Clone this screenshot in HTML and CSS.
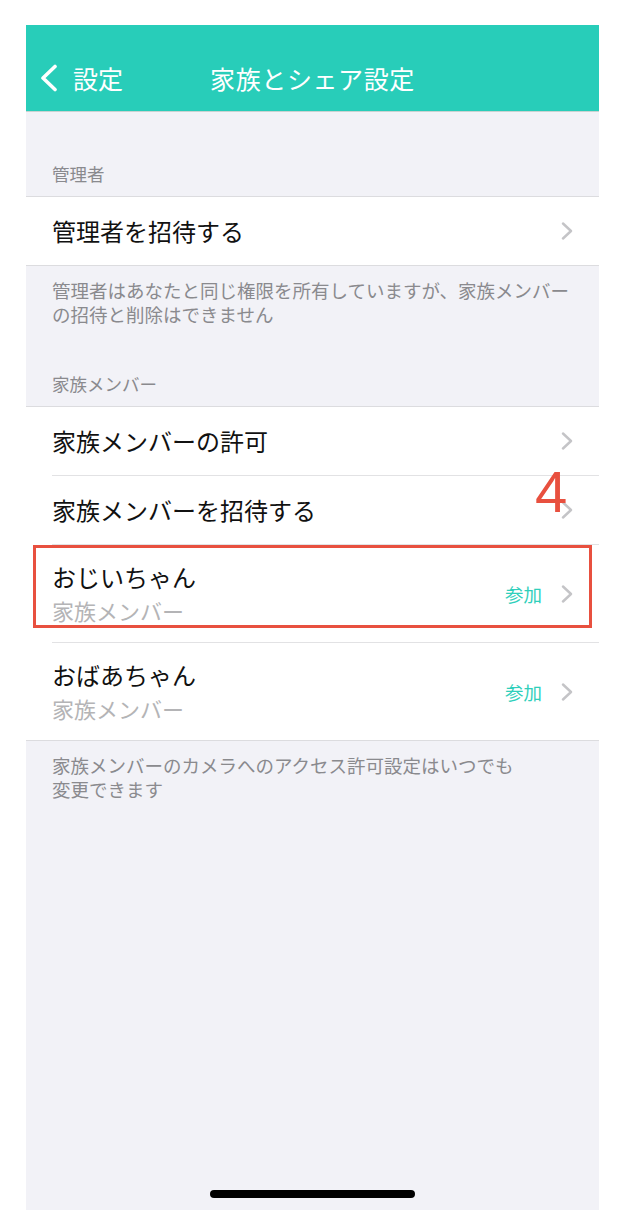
FILE: index.html
```html
<!DOCTYPE html>
<html lang="ja">
<head>
    <meta charset="UTF-8">
    <title>家族とシェア設定</title>
    <link rel="stylesheet" href="styles.css">
</head>
<body>
<div class="screen">
    <header class="nav-bar">
        <a class="back" href="#">
            <svg width="18" height="28" viewBox="0 0 18 28"><path d="M15 2.5 L3 14 L15 25.5" fill="none" stroke="#fff" stroke-width="3.6" stroke-linecap="round" stroke-linejoin="round"/></svg>
            <span>設定</span>
        </a>
        <h1 class="nav-title">家族とシェア設定</h1>
        <span></span>
    </header>
    <main class="content">
        <p class="section-label first">管理者</p>
        <div class="group">
            <div class="row">
                <div class="row-inner">
                    <span class="row-title">管理者を招待する</span>
                    <svg class="chevron" width="12" height="18" viewBox="0 0 12 18"><path d="M2 1.5 L10 9 L2 16.5" fill="none" stroke="#c4c4c7" stroke-width="2.4" stroke-linecap="round" stroke-linejoin="round"/></svg>
                </div>
            </div>
        </div>
        <p class="section-note">管理者はあなたと同じ権限を所有していますが、家族メンバー<br>の招待と削除はできません</p>

        <p class="section-label">家族メンバー</p>
        <div class="group">
            <div class="row">
                <div class="row-inner">
                    <span class="row-title">家族メンバーの許可</span>
                    <svg class="chevron" width="12" height="18" viewBox="0 0 12 18"><path d="M2 1.5 L10 9 L2 16.5" fill="none" stroke="#c4c4c7" stroke-width="2.4" stroke-linecap="round" stroke-linejoin="round"/></svg>
                </div>
            </div>
            <div class="row">
                <div class="row-inner">
                    <span class="row-title">家族メンバーを招待する</span>
                    <svg class="chevron" width="12" height="18" viewBox="0 0 12 18"><path d="M2 1.5 L10 9 L2 16.5" fill="none" stroke="#c4c4c7" stroke-width="2.4" stroke-linecap="round" stroke-linejoin="round"/></svg>
                </div>
                <span class="step-num">4</span>
            </div>
            <div class="row tall">
                <div class="row-inner">
                    <div class="row-text">
                        <span class="row-title">おじいちゃん</span>
                        <span class="row-sub">家族メンバー</span>
                    </div>
                    <span class="row-status">参加</span>
                    <svg class="chevron" width="12" height="18" viewBox="0 0 12 18"><path d="M2 1.5 L10 9 L2 16.5" fill="none" stroke="#c4c4c7" stroke-width="2.4" stroke-linecap="round" stroke-linejoin="round"/></svg>
                </div>
                <span class="highlight"></span>
            </div>
            <div class="row tall">
                <div class="row-inner">
                    <div class="row-text">
                        <span class="row-title">おばあちゃん</span>
                        <span class="row-sub">家族メンバー</span>
                    </div>
                    <span class="row-status">参加</span>
                    <svg class="chevron" width="12" height="18" viewBox="0 0 12 18"><path d="M2 1.5 L10 9 L2 16.5" fill="none" stroke="#c4c4c7" stroke-width="2.4" stroke-linecap="round" stroke-linejoin="round"/></svg>
                </div>
            </div>
        </div>
        <p class="section-note">家族メンバーのカメラへのアクセス許可設定はいつでも<br>変更できます</p>
    </main>
    <div class="home-bar"></div>
</div>
</body>
</html>
```

FILE: styles.css
```css
body {
    margin: 0;
    background: #fff;
    font-family: "Noto Sans CJK JP", "Noto Sans", sans-serif;
    color: #111;
}
.screen {
    width: 573px;
    height: 1185px;
    margin: 25px 0 0 26px;
    background: #f2f2f7;
    display: flex;
    flex-direction: column;
}
.nav-bar {
    height: 87px;
    box-sizing: border-box;
    padding-top: 19px;
    background: #28cdb9;
    border-bottom: 1px solid #c9d3d1;
    display: grid;
    grid-template-columns: 1fr auto 1fr;
    align-items: center;
    color: #fff;
}
.back {
    display: flex;
    align-items: center;
    gap: 15px;
    padding-left: 14px;
    color: #fff;
    text-decoration: none;
    font-size: 25px;
    line-height: 30px;
}
.nav-title {
    margin: 0;
    font-size: 25px;
    font-weight: normal;
    line-height: 30px;
    letter-spacing: 0.6px;
}
.content {
    display: flex;
    flex-direction: column;
}
.section-label {
    margin: 0;
    padding: 46px 26px 10px;
    font-size: 17.5px;
    line-height: 24px;
    color: #8a8a8e;
}
.section-label.first {
    padding-top: 50px;
}
.section-note {
    margin: 0;
    padding: 12px 26px 0;
    font-size: 18.5px;
    line-height: 24px;
    color: #8a8a8e;
}
.group {
    background: #fff;
    border-top: 1px solid #dcdcdf;
    border-bottom: 1px solid #dcdcdf;
}
.row {
    position: relative;
    padding-left: 26px;
}
.row-inner {
    height: 68px;
    padding-right: 26px;
    display: flex;
    align-items: center;
}
.row + .row .row-inner {
    border-top: 1px solid #e2e2e4;
}
.row.tall .row-inner {
    height: 97px;
}
.row-text {
    display: flex;
    flex-direction: column;
}
.row-title {
    font-size: 24px;
    line-height: 30px;
    color: #111;
}
.row-sub {
    padding-top: 3px;
    font-size: 22px;
    line-height: 30px;
    color: #b4b4b6;
}
.row-status {
    margin-left: auto;
    margin-right: 19px;
    font-size: 18.5px;
    line-height: 24px;
    color: #2fcfbb;
}
.chevron {
    margin-left: auto;
    flex-shrink: 0;
}
.row-status + .chevron {
    margin-left: 0;
}
.highlight {
    position: absolute;
    top: 1px;
    left: 7px;
    right: 7px;
    height: 83px;
    box-sizing: border-box;
    border: 3px solid #e8503f;
}
.step-num {
    position: absolute;
    top: -12px;
    left: 509px;
    font-family: "Liberation Sans", Arial, sans-serif;
    font-size: 58px;
    line-height: 1;
    color: #e8503f;
}
.home-bar {
    margin: auto auto 12px;
    width: 205px;
    height: 8px;
    border-radius: 4px;
    background: #000;
}
```
